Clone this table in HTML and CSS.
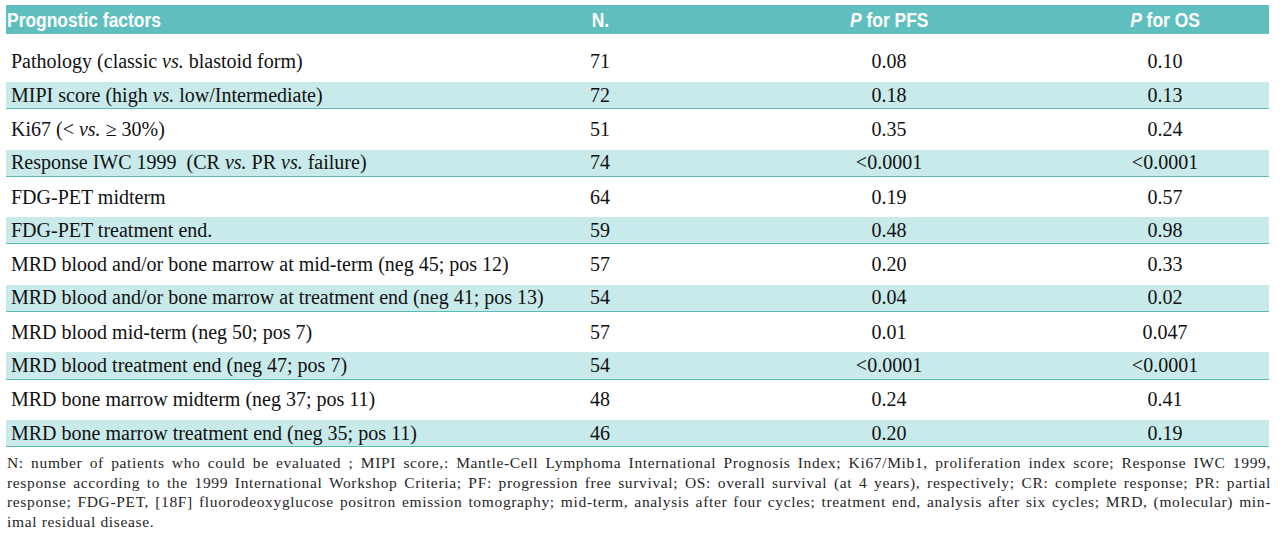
FILE: index.html
```html
<!DOCTYPE html>
<html lang="en">
<head>
<meta charset="utf-8">
<title>Prognostic factors</title>
<link rel="stylesheet" href="styles.css">
</head>
<body>
<div class="wrap">
  <div class="tbl">
    <div class="row head">
      <div class="c1"><span class="hd left">Prognostic factors</span></div>
      <div class="cc"><span class="hd">N.</span></div>
      <div class="cc"><span class="hd"><i>P</i> for PFS</span></div>
      <div class="cc"><span class="hd"><i>P</i> for OS</span></div>
    </div>
    <div class="row first">
      <div class="c1">Pathology (classic <i>vs.</i> blastoid form)</div>
      <div class="cc">71</div><div class="cc">0.08</div><div class="cc">0.10</div>
    </div>
    <div class="row alt">
      <div class="c1">MIPI score (high <i>vs.</i> low/Intermediate)</div>
      <div class="cc">72</div><div class="cc">0.18</div><div class="cc">0.13</div>
    </div>
    <div class="row">
      <div class="c1">Ki67 (&lt; <i>vs.</i> ≥ 30%)</div>
      <div class="cc">51</div><div class="cc">0.35</div><div class="cc">0.24</div>
    </div>
    <div class="row alt">
      <div class="c1">Response IWC 1999 &nbsp;(CR <i>vs.</i> PR <i>vs.</i> failure)</div>
      <div class="cc">74</div><div class="cc">&lt;0.0001</div><div class="cc">&lt;0.0001</div>
    </div>
    <div class="row">
      <div class="c1">FDG-PET midterm</div>
      <div class="cc">64</div><div class="cc">0.19</div><div class="cc">0.57</div>
    </div>
    <div class="row alt">
      <div class="c1">FDG-PET treatment end.</div>
      <div class="cc">59</div><div class="cc">0.48</div><div class="cc">0.98</div>
    </div>
    <div class="row">
      <div class="c1">MRD blood and/or bone marrow at mid-term (neg 45; pos 12)</div>
      <div class="cc">57</div><div class="cc">0.20</div><div class="cc">0.33</div>
    </div>
    <div class="row alt">
      <div class="c1">MRD blood and/or bone marrow at treatment end (neg 41; pos 13)</div>
      <div class="cc">54</div><div class="cc">0.04</div><div class="cc">0.02</div>
    </div>
    <div class="row">
      <div class="c1">MRD blood mid-term (neg 50; pos 7)</div>
      <div class="cc">57</div><div class="cc">0.01</div><div class="cc">0.047</div>
    </div>
    <div class="row alt">
      <div class="c1">MRD blood treatment end (neg 47; pos 7)</div>
      <div class="cc">54</div><div class="cc">&lt;0.0001</div><div class="cc">&lt;0.0001</div>
    </div>
    <div class="row">
      <div class="c1">MRD bone marrow midterm (neg 37; pos 11)</div>
      <div class="cc">48</div><div class="cc">0.24</div><div class="cc">0.41</div>
    </div>
    <div class="row alt">
      <div class="c1">MRD bone marrow treatment end (neg 35; pos 11)</div>
      <div class="cc">46</div><div class="cc">0.20</div><div class="cc">0.19</div>
    </div>
  </div>
  <p class="note">
    <span class="ln">N: number of patients who could be evaluated ; MIPI score,: Mantle-Cell Lymphoma International Prognosis Index; Ki67/Mib1, proliferation index score; Response IWC 1999,</span>
    <span class="ln">response according to the 1999 International Workshop Criteria; PF: progression free survival; OS: overall survival (at 4 years), respectively; CR: complete response; PR: partial</span>
    <span class="ln">response; FDG-PET, [18F] fluorodeoxyglucose positron emission tomography; mid-term, analysis after four cycles; treatment end, analysis after six cycles; MRD, (molecular) min-</span>
    <span class="ln last">imal residual disease.</span>
  </p>
</div>
</body>
</html>
```

FILE: styles.css
```css
html, body {
  margin: 0;
  padding: 0;
  background: #ffffff;
}

.wrap {
  padding: 5px 0 0 6px;
  width: 1266px;
}

.tbl {
  width: 1263px;
  font-family: "Liberation Serif", "Times New Roman", serif;
  font-size: 20px;
  color: #111111;
}

.row {
  display: grid;
  grid-template-columns: 477px 234px 344px 208px;
  align-items: center;
  height: 27.3px;
  box-sizing: border-box;
  margin-top: 6.5px;
  white-space: nowrap;
}

.row .c1 {
  padding-left: 5px;
}

.row .cc {
  text-align: center;
}

.row.head {
  margin-top: 0;
  height: 29px;
  background: #5fbfbf;
  color: #ffffff;
  font-family: "Liberation Sans", Arial, sans-serif;
  font-weight: bold;
  font-size: 21px;
  line-height: 29px;
  align-items: start;
}

.row.head .c1 {
  padding-left: 1px;
}

.hd {
  display: inline-block;
  transform: scaleX(0.83);
  transform-origin: center;
}

.hd.left {
  transform-origin: left center;
}

.row.first {
  margin-top: 14.2px;
}

.row.alt {
  background: #c8eaea;
  border-bottom: 1.5px solid #5db8b8;
}

.note {
  margin: 6px 0 0 1px;
  width: 1264px;
  font-family: "Liberation Serif", "Times New Roman", serif;
  font-size: 15.5px;
  letter-spacing: 0.65px;
  line-height: 19.5px;
  color: #262626;
}

.note .ln {
  display: block;
  text-align: justify;
  text-align-last: justify;
  white-space: nowrap;
}

.note .ln.last {
  text-align-last: left;
}
```
